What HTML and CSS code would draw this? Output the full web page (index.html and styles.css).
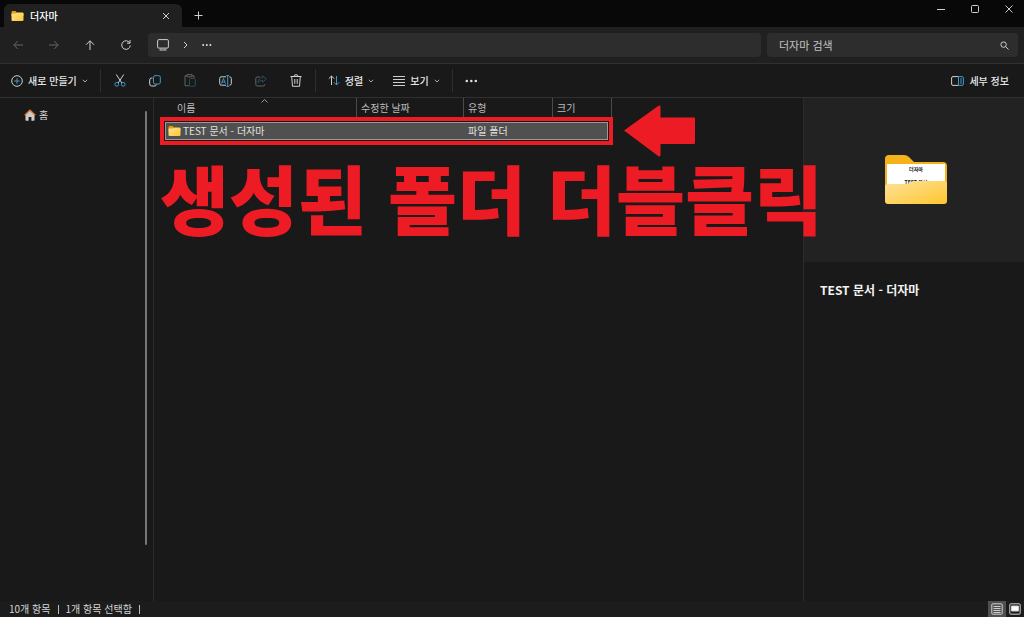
FILE: index.html
```html
<!DOCTYPE html>
<html lang="ko">
<head>
<meta charset="utf-8">
<title>더자마</title>
<link rel="stylesheet" href="styles.css">
</head>
<body>
<svg class="defs" aria-hidden="true">
  <defs>
    <linearGradient id="front" x1="0" y1="0" x2="1" y2="1"><stop offset="0" stop-color="#ffe29a"/><stop offset="1" stop-color="#ffc62f"/></linearGradient>
    <symbol id="folder" viewBox="0 0 12 10"><path d="M0 1.2Q0 0 1.2 0H4l1.5 1.4H11q1 0 1 1V5H0z" fill="#e8a000"/><path d="M0 3.2Q0 2.6.8 2.6H4.3L5.6 1.8H11q1 0 1 .9V9q0 1-1 1H1Q0 10 0 9z" fill="url(#front)"/></symbol>
    <symbol id="chev" viewBox="0 0 6 4"><path d="M.8.8 3 3 5.200.8" fill="none" stroke="#aaa"/></symbol>
  </defs>
</svg>
<div class="window">
  <header class="titlebar">
    <div class="tab">
      <svg class="folder-icon" width="13" height="10"><use href="#folder"/></svg>
      <span class="tab-title">더자마</span>
      <button class="plain" aria-label="탭 닫기"><svg width="8" height="8" viewBox="0 0 8 8"><path d="M1 1l6 6M7 1 1 7"/></svg></button>
    </div>
    <button class="plain new-tab" aria-label="새 탭"><svg width="9" height="9" viewBox="0 0 9 9"><path d="M4.500.5v8M.5 4.500h8"/></svg></button>
    <div class="window-buttons">
      <button class="plain" aria-label="최소화"><svg width="8" height="8" viewBox="0 0 8 8"><path d="M0 4.500h8"/></svg></button>
      <button class="plain" aria-label="최대화"><svg width="8" height="8" viewBox="0 0 8 8"><rect x=".5" y=".5" width="7" height="7" rx="1"/></svg></button>
      <button class="plain" aria-label="닫기"><svg width="8" height="8" viewBox="0 0 8 8"><path d="M.5.500l7 7M7.500.5l-7 7"/></svg></button>
    </div>
  </header>

  <nav class="navbar">
    <div class="nav-buttons">
      <button class="plain dim" aria-label="뒤로"><svg width="10" height="10" viewBox="0 0 10 10"><path d="M10 5H.8M4.800 1l-4 4 4 4"/></svg></button>
      <button class="plain dim" aria-label="앞으로"><svg width="10" height="10" viewBox="0 0 10 10"><path d="M0 5h9.200M5.200 1l4 4-4 4"/></svg></button>
      <button class="plain" aria-label="위로"><svg width="10" height="10" viewBox="0 0 10 10"><path d="M5 10V.8M1 4.800l4-4 4 4"/></svg></button>
      <button class="plain" aria-label="새로 고침"><svg width="10" height="10" viewBox="0 0 10 10"><path d="M8.800 3A4.300 4.300 0 1 0 9.300 5.500M9 0v3.200H6"/></svg></button>
    </div>
    <div class="address">
      <svg width="12" height="12" viewBox="0 0 12 12"><rect x=".6" y=".6" width="10.800" height="8.500" rx="1.200"/><path d="M2.500 11h7M4 9.500v1M8 9.500v1"/></svg>
      <svg width="5" height="8" viewBox="0 0 5 8"><path d="M1 1l3 3-3 3"/></svg>
      <button class="plain" aria-label="경로 더 보기"><svg width="10" height="4" viewBox="0 0 10 4"><g class="dots"><circle cx="1.200" cy="2" r="1"/><circle cx="4.800" cy="2" r="1"/><circle cx="8.400" cy="2" r="1"/></g></svg></button>
    </div>
    <label class="search">
      <input type="search" placeholder="더자마 검색" aria-label="더자마 검색">
      <svg width="9" height="9" viewBox="0 0 9 9"><circle cx="3.600" cy="3.600" r="2.700"/><path d="M5.600 5.600 8.500 8.500"/></svg>
    </label>
  </nav>

  <div class="toolbar">
    <button class="tool new"><svg width="12" height="12" viewBox="0 0 12 12"><circle cx="6" cy="6" r="5.300"/><path class="blue" d="M6 3.200v5.600M3.200 6h5.600"/></svg>새로 만들기<svg width="6" height="4"><use href="#chev"/></svg></button>
    <span class="divider"></span>
    <div class="tool-icons">
      <button class="plain" aria-label="잘라내기"><svg width="12" height="13" viewBox="0 0 12 13"><path d="M2.300.5 7.800 9M9.700.5 4.200 9"/><g class="blue"><circle cx="2.800" cy="10.300" r="1.900"/><circle cx="9.200" cy="10.300" r="1.900"/></g></svg></button>
      <button class="plain" aria-label="복사"><svg width="12" height="12" viewBox="0 0 12 12"><path d="M3.500 3H2.200Q.7 3.200.7 5v4q0 2 2 2h3q1.500 0 1.800-1.500"/><rect class="blue" x="4.500" y=".7" width="6.800" height="8.300" rx="1.500"/></svg></button>
      <button class="plain faded" aria-label="붙여넣기"><svg width="12" height="13" viewBox="0 0 12 13"><path d="M3 1.800H1v10h4M8 1.800h2V4M3 .6h5v2.200H3z"/><rect class="blue" x="5.500" y="4.500" width="5.800" height="7.800" rx="1"/></svg></button>
      <button class="plain" aria-label="이름 바꾸기"><svg width="13" height="12" viewBox="0 0 13 12"><path d="M7 1.800H2.200Q.7 1.800.7 3.500v5q0 1.700 1.500 1.700H7M10.500 1.800q1.800 0 1.800 1.700v5q0 1.700-1.800 1.700"/><path class="blue" d="M2.500 8.500 4.500 3.500 6.500 8.500M3.200 7h2.600M8.700.6v10.800M7.300.6h2.800M7.300 11.400h2.800"/></svg></button>
      <button class="plain faded" aria-label="공유"><svg width="12" height="12" viewBox="0 0 12 12"><path d="M5 2H2.200Q.8 2 .8 3.500v6Q.8 11 2.200 11h6q1.500 0 1.500-1.500V9"/><path class="blue" d="M7.500.8 11.300 4 7.500 7.200V5.500Q4.500 5.300 3 7.700 3.400 3 7.500 2.600z"/></svg></button>
      <button class="plain" aria-label="삭제"><svg width="12" height="13" viewBox="0 0 12 13"><path d="M.5 2.500h11M4 2.300Q4 .7 6 .7t2 1.600M1.700 2.500l.8 9.800h7l.8-9.800M4.800 5v4.800M7.200 5v4.800"/></svg></button>
    </div>
    <span class="divider"></span>
    <button class="tool sort"><svg width="12" height="11" viewBox="0 0 12 11"><path d="M3.500 10V1M.8 3.700 3.500 1l2.700 2.700"/><path class="blue" d="M8.500 1v9M5.800 7.300 8.500 10l2.700-2.700"/></svg>정렬<svg width="6" height="4"><use href="#chev"/></svg></button>
    <button class="tool view"><svg width="12" height="10" viewBox="0 0 12 10"><path d="M0 .5h12M0 3.500h12M0 6.500h12M0 9.500h12"/></svg>보기<svg width="6" height="4"><use href="#chev"/></svg></button>
    <span class="divider"></span>
    <button class="plain more" aria-label="더 보기"><svg width="13" height="4" viewBox="0 0 13 4"><g class="dots"><circle cx="1.800" cy="2" r="1.300"/><circle cx="6.300" cy="2" r="1.300"/><circle cx="10.800" cy="2" r="1.300"/></g></svg></button>
    <button class="tool details-toggle"><svg width="13" height="10" viewBox="0 0 13 10"><path d="M7.500.6H2Q.6.6.6 2v6q0 1.400 1.400 1.400h5.500"/><path class="blue" d="M7.500.6H11q1.400 0 1.400 1.400v6q0 1.400-1.400 1.400H7.500zM9 3h2M9 5h2M9 7h2"/></svg>세부 정보</button>
  </div>

  <main class="body">
    <aside class="sidebar">
      <a class="home" href="#"><svg width="12" height="12" viewBox="0 0 12 12"><path d="M1.500 5.500 6 1.500l4.500 4V11q0 .8-.8.8H7.400V8H4.600v3.800H2.300q-.8 0-.8-.8z" fill="#ccc"/><path d="M.7 6.200 6 1.200l5.300 5" fill="none" stroke="#d97b35" stroke-width="1.500"/></svg>홈</a>
      <div class="scrollbar"></div>
    </aside>
    <section class="files">
      <table>
        <colgroup><col class="c-name"><col class="c-date"><col class="c-type"><col class="c-size"></colgroup>
        <thead><tr><th>이름<svg class="sort-mark" width="7" height="4" viewBox="0 0 7 4"><path d="M.5 3.500l3-3 3 3"/></svg></th><th>수정한 날짜</th><th>유형</th><th>크기</th></tr></thead>
        <tbody><tr><td><div class="file"><svg width="13" height="10"><use href="#folder"/></svg>TEST 문서 - 더자마</div></td><td></td><td>파일 폴더</td><td></td></tr></tbody>
      </table>
      <div class="frame"></div>
      <svg class="arrow" width="72" height="52" viewBox="0 0 72 52"><path d="M1 25.500 35.500.8Q37.500 0 37.500 2v10.500H71q1 0 1 1v24.500q0 1-1 1H37.500V50q0 2-2 1.200z" fill="#ed1c24"/></svg>
      <p class="headline">생성된 폴더 더블클릭</p>
    </section>
    <aside class="details">
      <div class="preview">
        <div class="big-folder">
          <svg width="64" height="50" viewBox="0 0 64 50"><path d="M1 4q0-4 4-4h15q3 0 5 2l5 5h29q4 0 4 4v30H1z" fill="#f6b21b"/><path d="M3 9h58v22H3z" fill="#fff"/></svg>
          <div class="paper"><span>더자마</span><span>TEST 문서</span></div>
          <svg class="pocket" width="64" height="24" viewBox="0 0 64 24"><path d="M1 6q0-3 3-3h18q2 0 4-1.500T30 0h30q3 0 3 3v17q0 3-3 3H4q-3 0-3-3z" fill="url(#front)"/></svg>
        </div>
      </div>
      <h1>TEST 문서 - 더자마</h1>
    </aside>
  </main>

  <footer class="status">
    <span>10개 항목</span><span class="bar"></span><span>1개 항목 선택함</span><span class="bar"></span>
    <div class="modes">
      <button class="mode on" aria-label="자세히"><svg width="12" height="12" viewBox="0 0 12 12"><rect x=".8" y=".8" width="10.400" height="10.400" rx="1"/><path d="M2.500 3.500h7M2.500 5.500h7M2.500 7.500h7M2.500 9.500h7"/></svg></button>
      <button class="mode" aria-label="큰 아이콘"><svg width="12" height="12" viewBox="0 0 12 12"><rect x=".8" y=".8" width="10.400" height="10.400" rx="1"/><path d="M2.500 3h7v5h-7z" fill="#fff"/></svg></button>
    </div>
  </footer>
</div>
</body>
</html>
```
FILE: styles.css
```css
* { box-sizing: border-box; }
body {
  margin: 0;
  background: #191919;
  color: #d6d6d6;
  font: 10px/14px "Noto Sans CJK KR", "Noto Sans", sans-serif;
}
button { padding: 0; border: 0; background: none; color: inherit; font: inherit; }
svg { display: block; flex: none; fill: none; stroke: #cfcfcf; }
svg use, .folder-icon, .arrow, .big-folder svg, .home svg { stroke: none; }
.defs { position: absolute; width: 0; height: 0; }
.blue { stroke: #3f9ac9; }
.dots { fill: #ddd; stroke: none; }
.plain { display: grid; place-items: center; }
.dim { opacity: .4; }
.faded { opacity: .4; }

.window { display: flex; flex-direction: column; min-height: 100vh; overflow: hidden; }

.titlebar { display: flex; height: 27px; background: #080808; }
.tab {
  display: flex;
  align-items: center;
  width: 178px;
  margin: 4px 0 0 4px;
  padding: 0 12px 0 7px;
  border-radius: 6px 6px 0 0;
  background: #202020;
  color: #fff;
}
.tab-title { flex: 1; margin-left: 6px; font-weight: 500; }
.new-tab { margin: 4px 0 0 12px; }
.window-buttons { display: flex; gap: 26px; height: 18px; margin-left: auto; padding-right: 11px; }

.navbar { display: flex; align-items: center; height: 37px; padding-right: 6px; background: #202020; border-bottom: 1px solid #303030; }
.nav-buttons { display: flex; gap: 26px; padding: 0 17px 0 13px; }
.address, .search { display: flex; align-items: center; height: 24px; border-radius: 4px; background: #2d2d2d; }
.address { flex: 1; gap: 14px; padding-left: 9px; }
.search { width: 251px; margin-left: 6px; padding: 0 9px 0 12px; }
.search input { flex: 1; min-width: 0; padding: 0; border: 0; outline: 0; background: none; color: #ccc; font: 11px/16px "Noto Sans CJK KR", sans-serif; }
.search input::placeholder { color: #c4c4c4; opacity: 1; }

.toolbar { display: flex; align-items: center; height: 34px; padding: 0 15px 0 11px; border-bottom: 1px solid #303030; }
.tool { display: flex; align-items: center; gap: 6px; color: #e8e8e8; font-weight: 500; white-space: nowrap; }
.divider { width: 1px; height: 23px; background: #2e2e2e; }
.new { gap: 5px; margin-right: 12px; }
.tool-icons { display: flex; gap: 23px; padding: 0 13px; }
.sort { gap: 5px; margin-left: 12px; }
.view { gap: 5px; margin: 0 12px 0 19px; }
.more { margin-left: 12px; }
.details-toggle { margin-left: auto; gap: 5px; }

.body { display: flex; flex: 1; }
.sidebar { display: flex; justify-content: space-between; width: 154px; padding: 10px 6px 0 24px; border-right: 1px solid #2b2b2b; }
.home { display: flex; align-items: center; gap: 3px; height: 14px; color: inherit; text-decoration: none; }
.scrollbar { width: 2px; height: 434px; margin-top: 3px; border-radius: 1px; background: #777; }

.files { position: relative; flex: 1; min-width: 0; padding-left: 10px; }
table { width: 448px; border-collapse: separate; border-spacing: 0; table-layout: fixed; }
.c-name { width: 193px; }
.c-date { width: 107px; }
.c-type { width: 89px; }
.c-size { width: 59px; }
th { position: relative; height: 19px; padding: 0 0 0 4px; border-right: 1px solid #4b4b4b; color: #bdbdbd; font-weight: 400; line-height: 14px; text-align: left; }
th:first-child { padding-left: 13px; }
.sort-mark { position: absolute; top: 1px; left: 97px; stroke: #999; }
tbody { color: #e2e2e2; }
tbody td { height: 28px; padding: 0 0 0 4px; background: #505050; }
.file { display: flex; align-items: center; gap: 2px; white-space: nowrap; }
.frame { position: absolute; top: 19px; left: 6px; width: 453px; height: 28px; border: 4px solid #ed1c24; box-shadow: inset 0 0 0 1px #191919, inset 0 0 0 2px #999; }
.arrow { position: absolute; top: 7px; left: 469px; }
.headline {
  position: absolute;
  z-index: 1;
  top: 54px;
  left: 6px;
  margin: 0;
  color: #ed1c24;
  font-size: 75px;
  font-weight: 900;
  line-height: 90px;
  white-space: nowrap;
}

.details { width: 221px; border-left: 1px solid #2b2b2b; }
.preview { display: grid; place-items: center; height: 164px; padding-left: 4px; background: #222; }
.big-folder { position: relative; }
.paper { position: absolute; top: 10px; left: 4px; display: grid; width: 56px; color: #111; font-size: 5px; font-weight: 700; line-height: 8px; row-gap: 5px; text-align: center; }
.big-folder .pocket { position: absolute; bottom: 0; left: 0; }
h1 { margin: 19px 16px; color: #f2f2f2; font-size: 12px; font-weight: 700; line-height: 18px; }

.status { display: flex; align-items: center; gap: 7px; height: 16px; padding-left: 9px; background: #1c1c1c; }
.bar { width: 1px; height: 9px; background: #bbb; }
.modes { display: flex; align-self: stretch; margin-left: auto; }
.mode { display: grid; place-items: center; width: 18px; }
.mode.on { background: #505050; }
```
